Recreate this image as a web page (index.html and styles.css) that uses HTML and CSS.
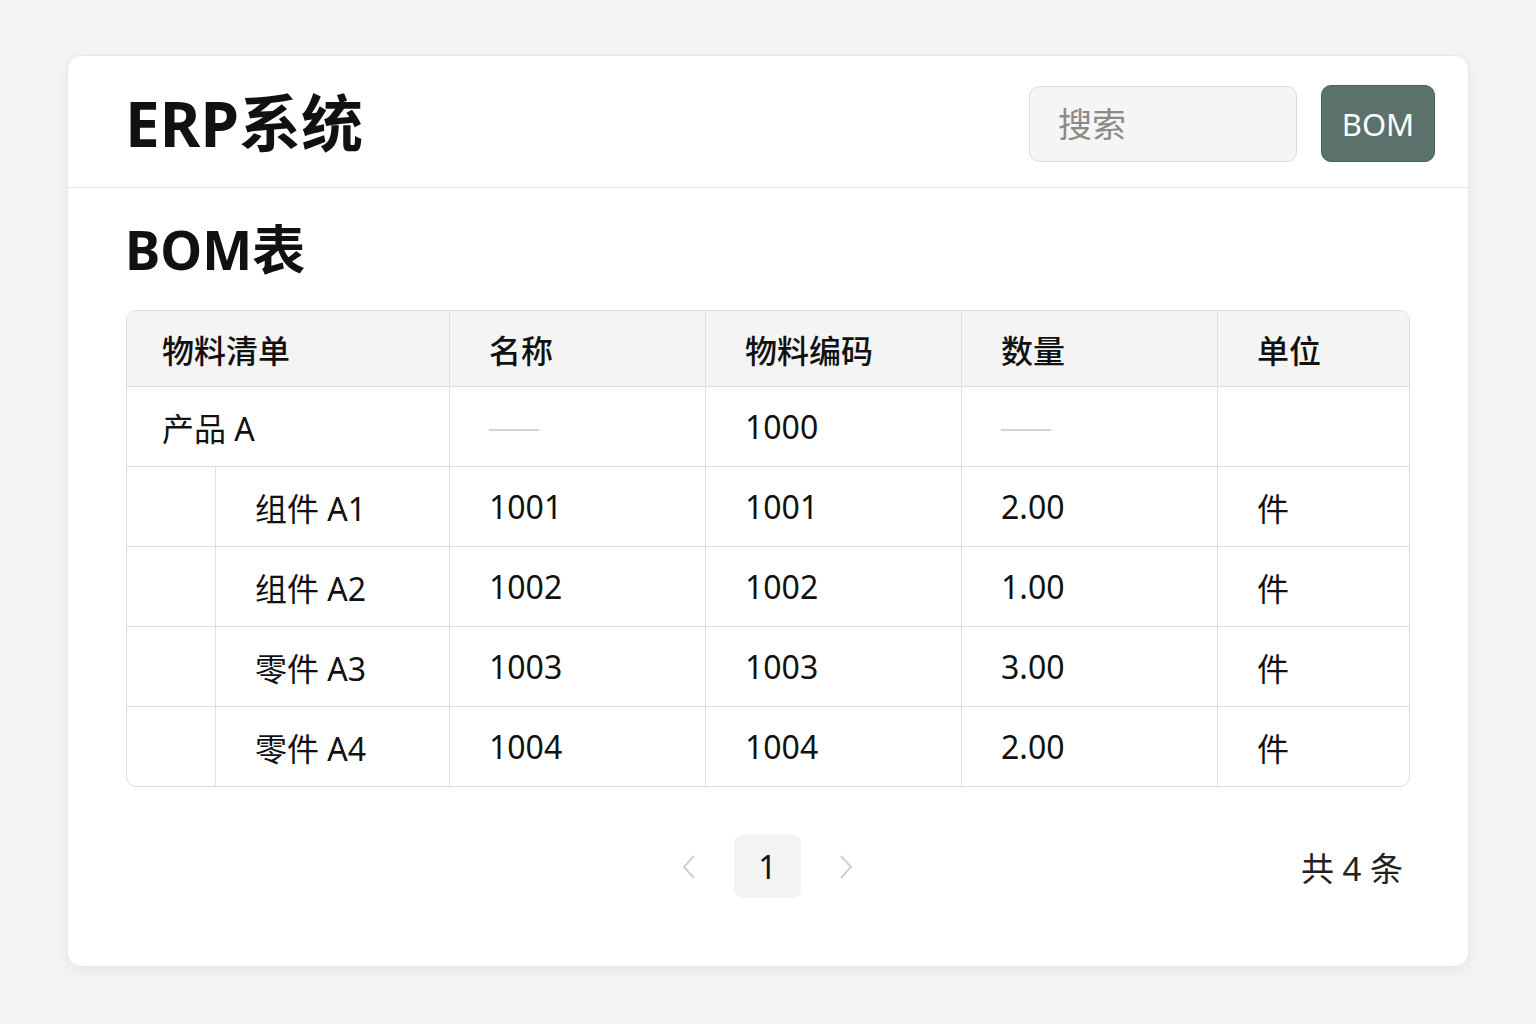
FILE: index.html
```html
<!DOCTYPE html>
<html lang="zh-CN">
  <head>
    <meta charset="UTF-8" />
    <meta name="viewport" content="width=device-width, initial-scale=1.0" />
    <title>ERP系统 - BOM表</title>
    <link rel="stylesheet" href="styles.css">
  </head>
  <body>
    <div class="card">
      <div class="header">
        <h1 class="logo">ERP系统</h1>
        <div class="tools">
          <input type="text" class="search" placeholder="搜索" />
          <button class="bomBtn">BOM</button>
        </div>
      </div>

      <div class="content">
        <h2 class="pageTitle">BOM表</h2>

        <table class="bom">
          <colgroup>
            <col class="cIndent" />
            <col class="cName" />
            <col class="cMid" />
            <col class="cMid" />
            <col class="cMid" />
            <col class="cUnit" />
          </colgroup>
          <thead>
            <tr>
              <th colspan="2" class="first">物料清单</th>
              <th>名称</th>
              <th>物料编码</th>
              <th>数量</th>
              <th>单位</th>
            </tr>
          </thead>
          <tbody>
            <tr>
              <td colspan="2" class="first">产品 A</td>
              <td><span class="dash"></span></td>
              <td>1000</td>
              <td><span class="dash"></span></td>
              <td></td>
            </tr>
            <tr>
              <td class="indent"></td>
              <td class="child">组件 A1</td>
              <td>1001</td>
              <td>1001</td>
              <td>2.00</td>
              <td>件</td>
            </tr>
            <tr>
              <td class="indent"></td>
              <td class="child">组件 A2</td>
              <td>1002</td>
              <td>1002</td>
              <td>1.00</td>
              <td>件</td>
            </tr>
            <tr>
              <td class="indent"></td>
              <td class="child">零件 A3</td>
              <td>1003</td>
              <td>1003</td>
              <td>3.00</td>
              <td>件</td>
            </tr>
            <tr>
              <td class="indent"></td>
              <td class="child">零件 A4</td>
              <td>1004</td>
              <td>1004</td>
              <td>2.00</td>
              <td>件</td>
            </tr>
          </tbody>
        </table>

        <div class="pager">
          <div></div>
          <div class="pages">
            <span class="arrow">
              <svg width="14" height="26" viewBox="0 0 14 26"><polyline points="12,2 2,13 12,24" fill="none" stroke="#d0d0d0" stroke-width="2" /></svg>
            </span>
            <span class="page">1</span>
            <span class="arrow">
              <svg width="14" height="26" viewBox="0 0 14 26"><polyline points="2,2 12,13 2,24" fill="none" stroke="#d0d0d0" stroke-width="2" /></svg>
            </span>
          </div>
          <div class="total">共 4 条</div>
        </div>
      </div>
    </div>
  </body>
</html>
```

FILE: styles.css
```css
* {
  margin: 0;
  padding: 0;
  box-sizing: border-box;
  font-family: "Noto Sans", "Noto Sans CJK SC", sans-serif;
}

body {
  background: #f4f4f4;
  padding: 55px 67px;
  color: #111;
}

.card {
  background: #fff;
  border: 1px solid #e8e8e8;
  border-radius: 14px;
  box-shadow: 0 4px 14px rgba(0, 0, 0, 0.06);
  height: 912px;
}

.header {
  height: 132px;
  display: flex;
  align-items: center;
  justify-content: space-between;
  padding: 0 33px 0 57px;
  border-bottom: 1px solid #e2e2e2;
}

.logo {
  font-size: 62px;
  font-weight: 700;
  margin-top: -4px;
}

.tools {
  display: flex;
  align-items: center;
  gap: 24px;
  margin-top: 4px;
}

.search {
  width: 268px;
  height: 76px;
  border: 1px solid #dcdcdc;
  border-radius: 10px;
  background: #f5f5f5;
  padding-left: 28px;
  font-size: 34px;
  outline: none;
}

.search::placeholder {
  color: #8a8a8a;
}

.bomBtn {
  width: 114px;
  height: 77px;
  border: 1px solid #4c605a;
  border-radius: 10px;
  background: #5b716b;
  color: #fff;
  font-size: 31px;
}

.content {
  padding: 24px 59px 0 58px;
}

.pageTitle {
  font-size: 53px;
  font-weight: 700;
  line-height: 76px;
  margin-bottom: 22px;
  margin-left: -1px;
}

.bom {
  width: 1282px;
  table-layout: fixed;
  border-collapse: separate;
  border-spacing: 0;
  border: 1px solid #dcdcdc;
  border-radius: 10px;
  overflow: hidden;
  font-size: 32px;
}

.cIndent {
  width: 88px;
}
.cName {
  width: 234px;
}
.cMid {
  width: 256px;
}
.cUnit {
  width: 192px;
}

.bom th,
.bom td {
  text-align: left;
  padding-left: 39px;
  border-left: 1px solid #dedede;
  border-top: 1px solid #dedede;
  white-space: nowrap;
}

.bom th:first-child,
.bom td:first-child {
  border-left: none;
}

.bom thead th {
  border-top: none;
  height: 75px;
  background: #f4f4f4;
  font-weight: 500;
}

.bom td {
  height: 80px;
  font-weight: 400;
}

.bom .first {
  padding-left: 35px;
}

.bom .indent {
  padding: 0;
}

.bom .child {
  padding-left: 39px;
}

.dash {
  display: inline-block;
  width: 50px;
  height: 2px;
  background: #d4d4d4;
  vertical-align: middle;
}

.pager {
  display: grid;
  grid-template-columns: 1fr auto 1fr;
  align-items: center;
  margin-top: 48px;
}

.pages {
  display: flex;
  align-items: center;
  gap: 38px;
}

.arrow {
  display: flex;
  align-items: center;
}

.page {
  width: 67px;
  height: 63px;
  background: #f3f3f3;
  border-radius: 8px;
  display: flex;
  align-items: center;
  justify-content: center;
  font-size: 32px;
}

.total {
  justify-self: end;
  font-size: 33px;
  padding-right: 6px;
  color: #222;
}
```
